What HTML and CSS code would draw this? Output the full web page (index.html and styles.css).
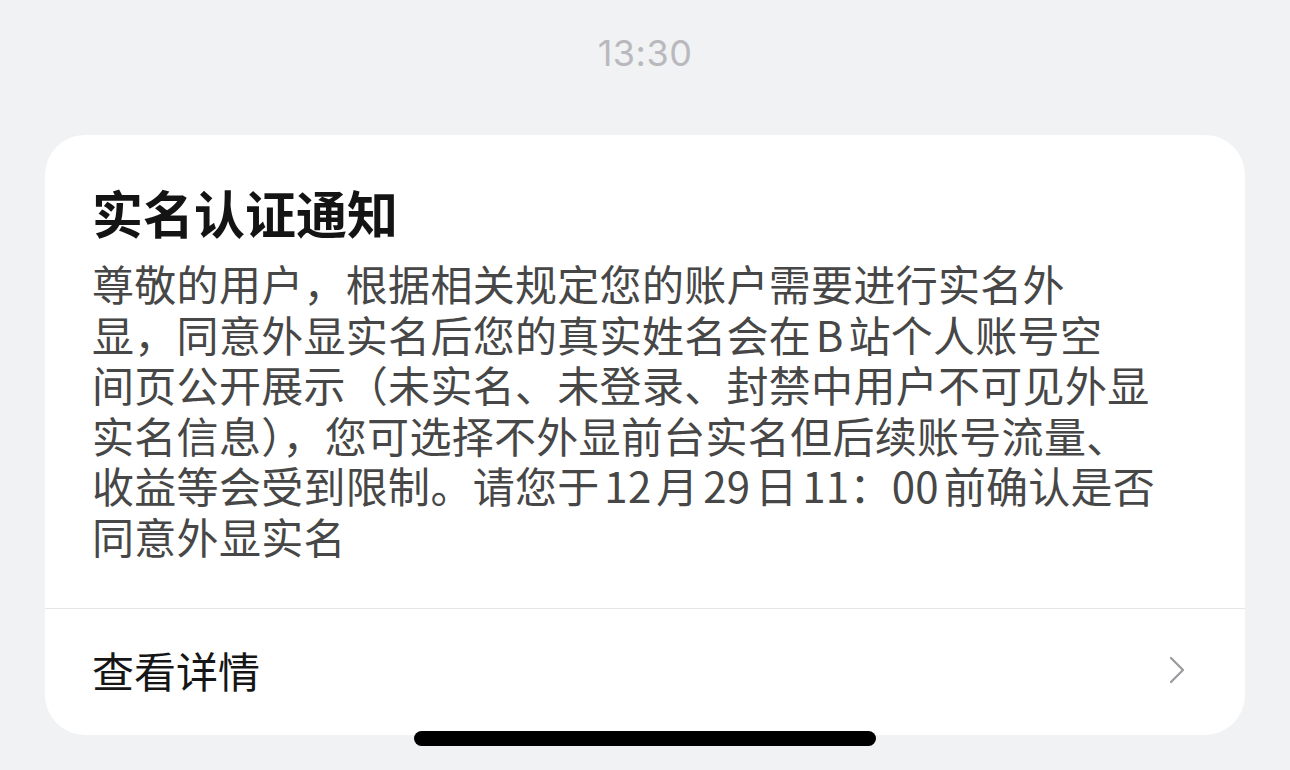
FILE: index.html
```html
<!DOCTYPE html>
<html lang="zh-CN">

<head>
    <meta charset="UTF-8">
    <meta name="viewport" content="width=device-width, initial-scale=1.0">
    <title>实名认证通知</title>
    <link rel="stylesheet" href="styles.css">
</head>

<body>

    <div class="screen">
        <div class="time">13:30</div>

        <div class="notice-card">
            <div class="notice-body">
                <h2 class="notice-title">实名认证通知</h2>
                <p class="notice-text">
                    尊敬的用户，根据相关规定您的账户需要进行实名外<br>
                    显，同意外显实名后您的真实姓名会在 B 站个人账号空<br>
                    间页公开展示（未实名、未登录、封禁中用户不可见外显<br>
                    实名信息），您可选择不外显前台实名但后续账号流量、<br>
                    收益等会受到限制。请您于 12 月 29 日 11：00 前确认是否<br>
                    同意外显实名
                </p>
            </div>
            <a class="notice-link" href="#">
                <span>查看详情</span>
                <svg class="chevron" width="16" height="28" viewBox="0 0 16 28">
                    <path d="M2 2 L14 14 L2 26" fill="none" stroke="#9a9a9e" stroke-width="2.2" stroke-linecap="round" stroke-linejoin="round"/>
                </svg>
            </a>
        </div>

        <div class="home-bar"></div>
    </div>

</body>

</html>
```

FILE: styles.css
```css
body {
    margin: 0;
    padding: 0;
    background-color: #f1f2f4;
    font-family: "Noto Sans CJK SC", "Noto Sans", sans-serif;
}

.screen {
    position: relative;
    width: 1290px;
    height: 770px;
    overflow: hidden;
    padding-top: 28px;
    box-sizing: border-box;
}

.time {
    text-align: center;
    font-family: Inter, "Noto Sans", sans-serif;
    font-size: 36px;
    line-height: 50px;
    color: #b9b9bd;
    letter-spacing: 0.5px;
}

.notice-card {
    margin: 57px 45px 0;
    background-color: #fff;
    border-radius: 40px;
    height: 600px;
    display: flex;
    flex-direction: column;
}

.notice-body {
    padding: 47px 40px 0 47px;
    height: 474px;
    box-sizing: border-box;
    border-bottom: 1.5px solid #e6e6e8;
}

.notice-title {
    margin: 0 0 16px;
    font-size: 51px;
    line-height: 60px;
    font-weight: 700;
    color: #141414;
}

.notice-text {
    margin: 0;
    font-size: 42px;
    line-height: 50.6px;
    letter-spacing: 0.3px;
    word-spacing: -5px;
    color: #474747;
}

.notice-link {
    flex: 1;
    display: flex;
    align-items: center;
    justify-content: space-between;
    padding: 0 60px 6px 47px;
    font-size: 42px;
    color: #161616;
    text-decoration: none;
}

.chevron {
    display: block;
    margin-top: 2px;
}

.home-bar {
    position: absolute;
    left: 414px;
    top: 731px;
    width: 462px;
    height: 15px;
    border-radius: 8px;
    background-color: #000;
}
```
